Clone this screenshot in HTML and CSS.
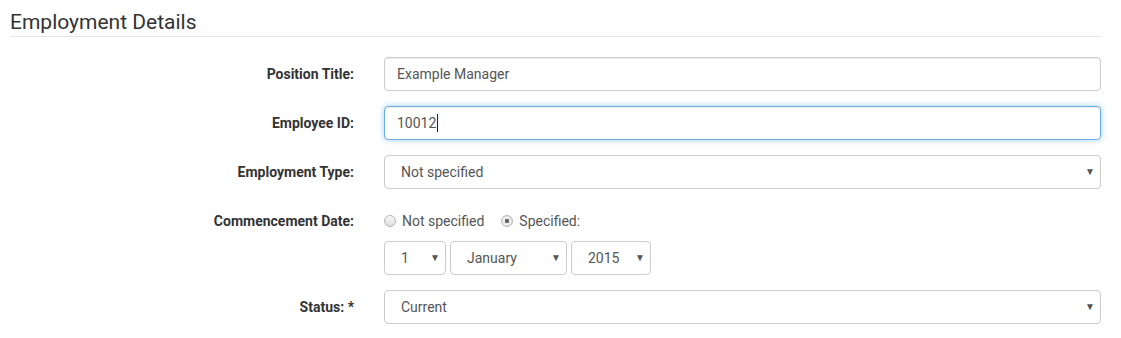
FILE: index.html
```html
<!DOCTYPE html>
<html lang="en">
<head>
  <meta charset="UTF-8" />
  <title>Employment Details</title>
  <link rel="stylesheet" href="styles.css">
</head>
<body>
  <div class="panel">
    <h2>Employment Details</h2>
    <form class="details">
      <label for="position">Position Title:</label>
      <div><input type="text" id="position" class="field" value="Example Manager"></div>

      <label for="empid">Employee ID:</label>
      <div class="input-wrap">
        <input type="text" id="empid" class="field focused" value="10012">
        <span class="cursor"></span>
      </div>

      <label for="emptype">Employment Type:</label>
      <div class="select-wrap">
        <select id="emptype" class="field">
          <option>Not specified</option>
        </select>
        <span class="caret">&#9660;</span>
      </div>

      <label>Commencement Date:</label>
      <div class="radios">
        <label class="radio"><input type="radio" name="start"> Not specified</label>
        <label class="radio"><input type="radio" name="start" checked> Specified:</label>
      </div>

      <span></span>
      <div class="date">
        <div class="select-wrap day">
          <select class="field"><option>1</option></select>
          <span class="caret">&#9660;</span>
        </div>
        <div class="select-wrap month">
          <select class="field"><option>January</option></select>
          <span class="caret">&#9660;</span>
        </div>
        <div class="select-wrap year">
          <select class="field"><option>2015</option></select>
          <span class="caret">&#9660;</span>
        </div>
      </div>

      <label for="status">Status: *</label>
      <div class="select-wrap">
        <select id="status" class="field">
          <option>Current</option>
        </select>
        <span class="caret">&#9660;</span>
      </div>
    </form>
  </div>
</body>
</html>
```

FILE: styles.css
```css
body {
  margin: 0;
  font-family: Roboto, "Helvetica Neue", Arial, sans-serif;
  font-size: 14px;
  color: #333;
  background: #fff;
}
.panel {
  width: 1091px;
  padding: 0 0 0 10px;
}
h2 {
  margin: 0;
  padding-top: 8px;
  height: 28px;
  font-size: 21px;
  font-weight: 400;
  line-height: 28px;
  color: #333;
  border-bottom: 1px solid #e5e5e5;
}
.details {
  display: grid;
  grid-template-columns: 344px 717px;
  column-gap: 30px;
  row-gap: 15px;
  margin-top: 20px;
  align-items: center;
}
.details > label {
  text-align: right;
  font-weight: 700;
  color: #333;
}
.field {
  display: block;
  box-sizing: border-box;
  width: 100%;
  height: 34px;
  padding: 0 12px;
  font-family: inherit;
  font-size: 14px;
  color: #555;
  background: #fff;
  border: 1px solid #ccc;
  border-radius: 4px;
  box-shadow: inset 0 1px 1px rgba(0, 0, 0, 0.075);
  outline: none;
}
.field.focused {
  border-color: #66afe9;
  box-shadow: inset 0 1px 1px rgba(0, 0, 0, 0.075), 0 0 6px rgba(102, 175, 233, 0.6);
}
.input-wrap {
  position: relative;
}
.cursor {
  position: absolute;
  left: 53px;
  top: 8px;
  width: 1px;
  height: 18px;
  background: #222;
}
select.field {
  -webkit-appearance: none;
  appearance: none;
  padding-left: 16px;
  box-shadow: none;
}
.select-wrap {
  position: relative;
}
.caret {
  position: absolute;
  right: 6px;
  top: 11px;
  font-size: 10px;
  color: #555;
  pointer-events: none;
}
.radios {
  display: flex;
  align-items: center;
  gap: 17px;
  height: 34px;
  color: #555;
}
.radio {
  display: flex;
  align-items: center;
  gap: 6px;
}
.radio input {
  -webkit-appearance: none;
  appearance: none;
  margin: 0;
  width: 12px;
  height: 12px;
  border: 1px solid #b5b5b5;
  border-radius: 50%;
  background: linear-gradient(#fafafa, #dcdcdc);
}
.radio input:checked {
  background: radial-gradient(circle, #666 0, #666 2px, #f0f0f0 2.5px, #dedede 100%);
}
.date {
  display: flex;
  gap: 4px;
  margin-top: -12px;
}
.day { width: 62px; }
.month { width: 117px; }
.year { width: 80px; }
```
